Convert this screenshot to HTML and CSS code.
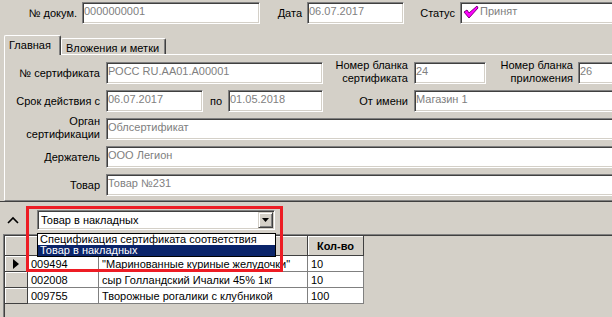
FILE: index.html
```html
<!DOCTYPE html>
<html lang="ru">
<head>
    <meta charset="UTF-8">
    <title>Сертификат</title>
    <link rel="stylesheet" href="styles.css">
</head>
<body>
    <div class="top">
        <span class="lbl lbl-doc">№ докум.</span>
        <div class="field f-doc">0000000001</div>
        <span class="lbl lbl-date">Дата</span>
        <div class="field f-date">06.07.2017</div>
        <span class="lbl lbl-status">Статус</span>
        <div class="field f-status grow">
            <svg class="check" width="16" height="14" viewBox="0 0 16 14">
                <path d="M1 7 L4 5 L6 8 L14 1 L15 3 L6 13 Z" fill="#ff00ff" stroke="#800080" stroke-width="1" stroke-linejoin="round"/>
            </svg>Принят
        </div>
    </div>

    <div class="tabs">
        <div class="tab active">Главная</div>
        <div class="tab">Вложения и метки</div>
    </div>

    <div class="panel">
        <div class="row">
            <span class="plbl">№ сертификата</span>
            <div class="field w-cert">РОСС RU.AA01.A00001</div>
            <span class="plbl two w-l2">Номер бланка<br>сертификата</span>
            <div class="field w-blank">24</div>
            <span class="plbl two w-l3">Номер бланка<br>приложения</span>
            <div class="field grow">26</div>
        </div>
        <div class="row">
            <span class="plbl">Срок действия с</span>
            <div class="field w-from">06.07.2017</div>
            <span class="plbl w-po">по</span>
            <div class="field w-to">01.05.2018</div>
            <span class="plbl w-l2">От имени</span>
            <div class="field grow">Магазин 1</div>
        </div>
        <div class="row">
            <span class="plbl two">Орган<br>сертификации</span>
            <div class="field grow">Облсертификат</div>
        </div>
        <div class="row">
            <span class="plbl">Держатель</span>
            <div class="field grow">ООО Легион</div>
        </div>
        <div class="row">
            <span class="plbl">Товар</span>
            <div class="field grow">Товар №231</div>
        </div>
    </div>

    <div class="split">
        <svg class="collapse" width="12" height="8" viewBox="0 0 12 8">
            <polyline points="1,7 6,2 11,7" fill="none" stroke="#000" stroke-width="1.6"/>
        </svg>
        <div class="combo">
            <span class="combo-text">Товар в накладных</span>
            <span class="combo-btn">
                <svg width="7" height="4" viewBox="0 0 7 4"><path d="M0 0 H7 L3.5 4 Z" fill="#000"/></svg>
            </span>
        </div>
    </div>

    <div class="grid">
        <!-- code and name headers sit under the open list -->
        <div class="gc hd ind"></div>
        <div class="gc hd"></div>
        <div class="gc hd"></div>
        <div class="gc hd">Кол-во</div>

        <div class="gc ind"><svg width="6" height="10" viewBox="0 0 6 10"><path d="M0 0 L6 5 L0 10 Z" fill="#000"/></svg></div>
        <div class="gc">009494</div>
        <div class="gc">"Маринованные куриные желудочки"</div>
        <div class="gc">10</div>

        <div class="gc ind"></div>
        <div class="gc">002008</div>
        <div class="gc">сыр Голландский Ичалки 45% 1кг</div>
        <div class="gc">10</div>

        <div class="gc ind"></div>
        <div class="gc">009755</div>
        <div class="gc">Творожные рогалики с клубникой</div>
        <div class="gc">100</div>
    </div>

    <ul class="droplist">
        <li>Спецификация сертификата соответствия</li>
        <li class="sel">Товар в накладных</li>
    </ul>

    <div class="marker"></div>
</body>
</html>
```

FILE: styles.css
```css
html, body {
    margin: 0;
    overflow: hidden;
}
body {
    position: relative;
    width: 612px;
    height: 317px;
    background: #d4d0c8;
    font: 11px "Liberation Sans", Arial, sans-serif;
    color: #000;
}

/* shared sunken edit box */
.field {
    box-sizing: border-box;
    height: 22px;
    flex: none;
    padding: 1px 1px 0;
    background: #fff;
    border: 1px solid;
    border-color: #808080 #fff #fff #808080;
    box-shadow: inset 1px 1px #404040, inset -1px -1px #d4d0c8;
    color: #808080;
    line-height: 14px;
    white-space: nowrap;
    overflow: hidden;
}
/* wide boxes run on past the window edge */
.grow {
    flex: 1;
    border-right: none;
    box-shadow: inset 1px 1px #404040, inset 0 -1px #d4d0c8;
}

/* header line */
.top {
    display: flex;
    align-items: center;
    height: 22px;
    padding-top: 2px;
}
.lbl {
    flex: none;
    text-align: right;
    margin-right: 5px;
}
.lbl-doc { width: 77px; }
.f-doc { width: 178px; }
.lbl-date { width: 42px; }
.f-date { width: 97px; }
.lbl-status { width: 51px; }
.f-status {
    display: flex;
    align-items: flex-start;
}
.check {
    margin: 1px 1px 0 1px;
    flex: none;
}

/* tabs */
.tabs {
    display: flex;
    align-items: flex-end;
    height: 19px;
    margin-top: 11px;
    padding-left: 4px;
}
.tab {
    box-sizing: border-box;
    height: 16px;
    padding: 2px 4px 0;
    border: 1px solid #fff;
    border-bottom: none;
    border-right-color: #404040;
    box-shadow: inset -1px 0 #808080;
    border-radius: 2px 2px 0 0;
    line-height: 14px;
    white-space: nowrap;
}
.tab.active {
    position: relative;
    z-index: 1;
    width: 57px;
    height: 20px;
    margin-bottom: -1px;
    padding-top: 2px;
    background: #d4d0c8;
}
.tab:not(.active) {
    width: 105px;
}

.panel {
    margin-left: 4px;
    padding: 7px 0 4px;
    border-top: 1px solid #fff;
    border-left: 1px solid #fff;
    border-bottom: 1px solid #808080;
    display: flex;
    flex-direction: column;
    gap: 6px;
}
.row {
    display: flex;
    align-items: center;
    height: 22px;
}
.plbl {
    flex: none;
    width: 95px;
    margin-right: 6px;
    text-align: right;
    line-height: 13px;
}
.plbl.two {
    margin-top: -3px;
}
.w-cert { width: 217px; }
.w-l2 { width: 85px; }
.w-blank { width: 72px; }
.w-l3 { width: 87px; margin-right: 5px; }
.w-from { width: 97px; }
.w-po { width: 19px; }
.w-to { width: 95px; }

/* splitter with lookup combo */
.split {
    display: flex;
    align-items: center;
    height: 32px;
    border-top: 1px solid #404040;
    padding-left: 7px;
}
.collapse {
    flex: none;
    margin-top: 3px;
}
.combo {
    box-sizing: border-box;
    display: flex;
    width: 238px;
    height: 20px;
    margin: 4px 0 0 18px;
    background: #fff;
    border: 1px solid;
    border-color: #808080 #fff #fff #808080;
    box-shadow: inset 1px 1px #404040, inset -1px -1px #d4d0c8;
    padding: 1px;
}
.combo-text {
    flex: 1;
    padding: 2px 2px 0;
    line-height: 13px;
}
.combo-btn {
    box-sizing: border-box;
    width: 15px;
    height: 16px;
    display: flex;
    align-items: center;
    justify-content: center;
    background: #d4d0c8;
    border: 1px solid;
    border-color: #d4d0c8 #404040 #404040 #d4d0c8;
    box-shadow: inset 1px 1px #fff, inset -1px -1px #808080;
}

/* data grid */
.grid {
    display: grid;
    grid-template-columns: 23px 71px 209px 56px;
    grid-template-rows: 20px;
    grid-auto-rows: 16px;
    align-content: start;
    height: 82px;
    margin-left: 3px;
    padding: 1px 0 0 1px;
    border-top: 1px solid #808080;
    border-left: 1px solid #808080;
    box-shadow: inset 1px 1px #404040;
}
.gc {
    box-sizing: border-box;
    background: #fff;
    border-right: 1px solid #808080;
    border-bottom: 1px solid #808080;
    padding: 1px 3px 0;
    line-height: 14px;
    white-space: nowrap;
    overflow: hidden;
}
.gc.hd {
    background: #d4d0c8;
    border-color: #404040;
    box-shadow: inset 1px 1px #fff;
    font-weight: bold;
    text-align: center;
    padding-top: 3px;
}
.gc.ind {
    background: #d4d0c8;
    border-color: #404040;
    box-shadow: inset 1px 1px #fff;
    display: flex;
    align-items: center;
    justify-content: center;
    padding: 0;
}

/* open dropdown of the combo */
.droplist {
    position: absolute;
    left: 37px;
    top: 233px;
    width: 239px;
    margin: 0;
    padding: 0;
    list-style: none;
    box-sizing: border-box;
    border: 1px solid #000;
    background: #fff;
}
.droplist li {
    height: 11px;
    padding: 0 2px;
    line-height: 11px;
    white-space: nowrap;
}
.droplist li.sel {
    background: #0a246a;
    color: #fff;
}

/* red highlight frame */
.marker {
    position: absolute;
    left: 26px;
    top: 206px;
    width: 251px;
    height: 60px;
    border: 3px solid #ed1c24;
}
```
